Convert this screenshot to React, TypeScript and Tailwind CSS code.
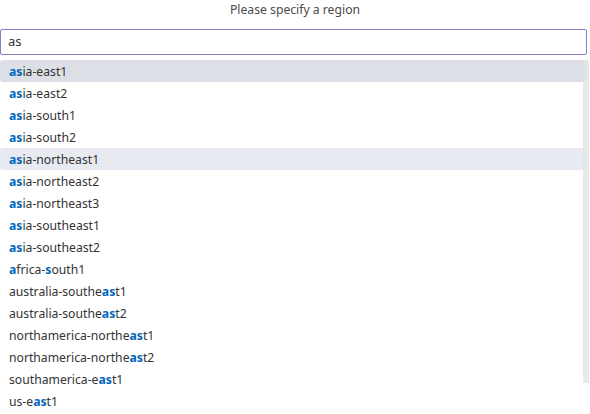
import React from 'react';

type Item = { label: string; hits: [number, number][] };

// ranges of matched characters for the query "as"
const items: Item[] = [
  { label: 'asia-east1', hits: [[0, 2]] },
  { label: 'asia-east2', hits: [[0, 2]] },
  { label: 'asia-south1', hits: [[0, 2]] },
  { label: 'asia-south2', hits: [[0, 2]] },
  { label: 'asia-northeast1', hits: [[0, 2]] },
  { label: 'asia-northeast2', hits: [[0, 2]] },
  { label: 'asia-northeast3', hits: [[0, 2]] },
  { label: 'asia-southeast1', hits: [[0, 2]] },
  { label: 'asia-southeast2', hits: [[0, 2]] },
  { label: 'africa-south1', hits: [[0, 1], [7, 8]] },
  { label: 'australia-southeast1', hits: [[16, 18]] },
  { label: 'australia-southeast2', hits: [[16, 18]] },
  { label: 'northamerica-northeast1', hits: [[19, 21]] },
  { label: 'northamerica-northeast2', hits: [[19, 21]] },
  { label: 'southamerica-east1', hits: [[14, 16]] },
  { label: 'us-east1', hits: [[4, 6]] },
];

function Label({ item }: { item: Item }) {
  const parts: React.ReactNode[] = [];
  let pos = 0;
  item.hits.forEach(([a, b], i) => {
    if (a > pos) parts.push(<span key={`t${i}`}>{item.label.slice(pos, a)}</span>);
    parts.push(
      <span key={`h${i}`} className="font-bold text-[#0066bf]">
        {item.label.slice(a, b)}
      </span>
    );
    pos = b;
  });
  if (pos < item.label.length) parts.push(<span key="rest">{item.label.slice(pos)}</span>);
  return <>{parts}</>;
}

export default function App() {
  return (
    <div className="w-[590px] h-[414px] overflow-hidden bg-white text-[12.2px] text-[#333] font-['Noto_Sans','Open_Sans',sans-serif]">
      <div className="h-[20px] leading-[20px] text-center text-[#4a4a4a]">Please specify a region</div>

      <div className="mt-[9px] mr-[3px] h-[26px] border border-[#8a7cc4] rounded-[2px] flex items-center px-[7px] text-[13px] text-[#333]">
        as
      </div>

      <div className="relative mt-[5px]">
        {items.map((item, i) => (
          <div
            key={item.label}
            className={
              'h-[22px] leading-[24px] pl-[9px] mr-[3px] rounded-[3px] ' +
              (i === 0 ? 'bg-[#dcdfe6]' : i === 4 ? 'bg-[#e8eaf2]' : '')
            }
          >
            <Label item={item} />
          </div>
        ))}

        {/* scrollbar thumb */}
        <div className="absolute top-0 right-[1px] w-[6px] h-[323px] bg-[#e4e4e4] opacity-80" />
      </div>
    </div>
  );
}
